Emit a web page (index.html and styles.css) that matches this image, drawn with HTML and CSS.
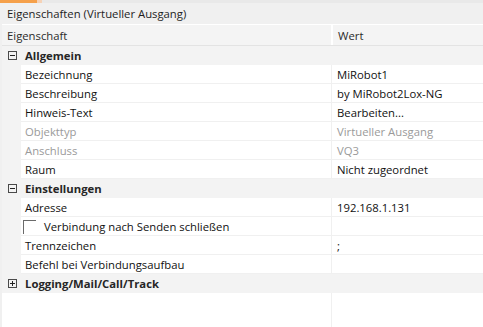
FILE: index.html
```html
<!DOCTYPE html>
<html>
<head>
<meta charset="utf-8">
<link rel="stylesheet" href="styles.css">
</head>
<body>
<div class="topbar"><span class="tab"></span><span class="tab-edge"></span></div>
<div class="title">Eigenschaften (Virtueller Ausgang)</div>
<div class="grid">
  <div class="head">
    <div class="hcell hname">Eigenschaft</div>
    <div class="hcell hval">Wert</div>
  </div>

  <div class="group">
    <span class="gut"><svg class="exp" width="9" height="9" viewBox="0 0 9 9"><rect x="0.5" y="0.5" width="8" height="8" fill="none" stroke="#4a4a4a"/><path d="M2 4.5H7" stroke="#222"/></svg></span>
    <span class="gname">Allgemein</span>
  </div>
  <div class="row"><span class="gut"></span><span class="name">Bezeichnung</span><span class="val">MiRobot1</span></div>
  <div class="row"><span class="gut"></span><span class="name">Beschreibung</span><span class="val">by MiRobot2Lox-NG</span></div>
  <div class="row"><span class="gut"></span><span class="name">Hinweis-Text</span><span class="val">Bearbeiten...</span></div>
  <div class="row dis"><span class="gut"></span><span class="name">Objekttyp</span><span class="val">Virtueller Ausgang</span></div>
  <div class="row dis"><span class="gut"></span><span class="name">Anschluss</span><span class="val">VQ3</span></div>
  <div class="row"><span class="gut"></span><span class="name">Raum</span><span class="val">Nicht zugeordnet</span></div>

  <div class="group">
    <span class="gut"><svg class="exp" width="9" height="9" viewBox="0 0 9 9"><rect x="0.5" y="0.5" width="8" height="8" fill="none" stroke="#4a4a4a"/><path d="M2 4.5H7" stroke="#222"/></svg></span>
    <span class="gname">Einstellungen</span>
  </div>
  <div class="row"><span class="gut"></span><span class="name">Adresse</span><span class="val">192.168.1.131</span></div>
  <div class="row"><span class="gut"></span><span class="name chk"><span class="box"></span><span>Verbindung nach Senden schließen</span></span><span class="val"></span></div>
  <div class="row"><span class="gut"></span><span class="name">Trennzeichen</span><span class="val">;</span></div>
  <div class="row"><span class="gut"></span><span class="name">Befehl bei Verbindungsaufbau</span><span class="val"></span></div>

  <div class="group">
    <span class="gut"><svg class="exp" width="9" height="9" viewBox="0 0 9 9"><rect x="0.5" y="0.5" width="8" height="8" fill="none" stroke="#4a4a4a"/><path d="M2 4.5H7M4.5 2V7" stroke="#222"/></svg></span>
    <span class="gname">Logging/Mail/Call/Track</span>
  </div>
  <div class="empty"><span class="ename"></span><span class="evals"></span></div>
</div>
</body>
</html>
```

FILE: styles.css
```css
html, body {
  margin: 0;
  padding: 0;
}
body {
  width: 483px;
  height: 327px;
  overflow: hidden;
  background: #f0f0f0;
  font-family: "Open Sans", "Noto Sans", sans-serif;
  font-size: 11.3px;
  color: #111;
  display: flex;
  flex-direction: column;
}
.topbar {
  height: 3px;
  background: #e9e9e9;
  display: flex;
}
.tab {
  width: 37px;
  background: #f5a04a;
}
.tab-edge {
  width: 5px;
  background: #f6d2b6;
}
.title {
  height: 21px;
  line-height: 21px;
  padding-left: 7px;
  color: #1e1e1e;
}
.grid {
  margin-left: 2px;
  flex: 1;
  display: flex;
  flex-direction: column;
  background: #fff;
}
.head {
  display: flex;
  height: 20px;
  border-top: 1px solid #fff;
  border-bottom: 1px solid #e3e3e3;
  background: #f4f4f4;
  color: #2b2b2b;
  line-height: 21px;
}
.hname {
  width: 324px;
  padding-left: 5px;
  border-right: 2px solid #ffffff;
}
.hval {
  padding-left: 5px;
}
.group {
  display: flex;
  height: 19px;
  line-height: 20px;
  background: #f3f3f3;
}
.gut {
  width: 19px;
  flex: none;
  background: #f3f3f3;
  display: flex;
  align-items: center;
}
.exp {
  margin-left: 6px;
  display: block;
}
.gname {
  padding-left: 4px;
  font-weight: bold;
  color: #262626;
}
.row {
  display: flex;
  height: 19px;
  line-height: 18px;
}
.name {
  width: 310px;
  flex: none;
  padding-left: 4px;
  padding-top: 1px;
  border-bottom: 1px solid #f0f0f0;
  box-sizing: border-box;
}
.val {
  flex: 1;
  padding-left: 5px;
  padding-top: 1px;
  border-left: 1px solid #f0f0f0;
  border-bottom: 1px solid #f0f0f0;
  box-sizing: border-box;
}
.dis .name, .dis .val {
  color: #9a9a9a;
}
.chk {
  display: flex;
  align-items: flex-start;
  padding-left: 2px;
}
.box {
  width: 12px;
  height: 13px;
  border-top: 1px solid #6a6a6a;
  border-left: 1px solid #6a6a6a;
  margin-right: 8px;
  margin-top: 2px;
}
.empty {
  flex: 1;
  display: flex;
}
.ename {
  width: 329px;
  flex: none;
}
.evals {
  flex: 1;
  border-left: 1px solid #f0f0f0;
}
```
